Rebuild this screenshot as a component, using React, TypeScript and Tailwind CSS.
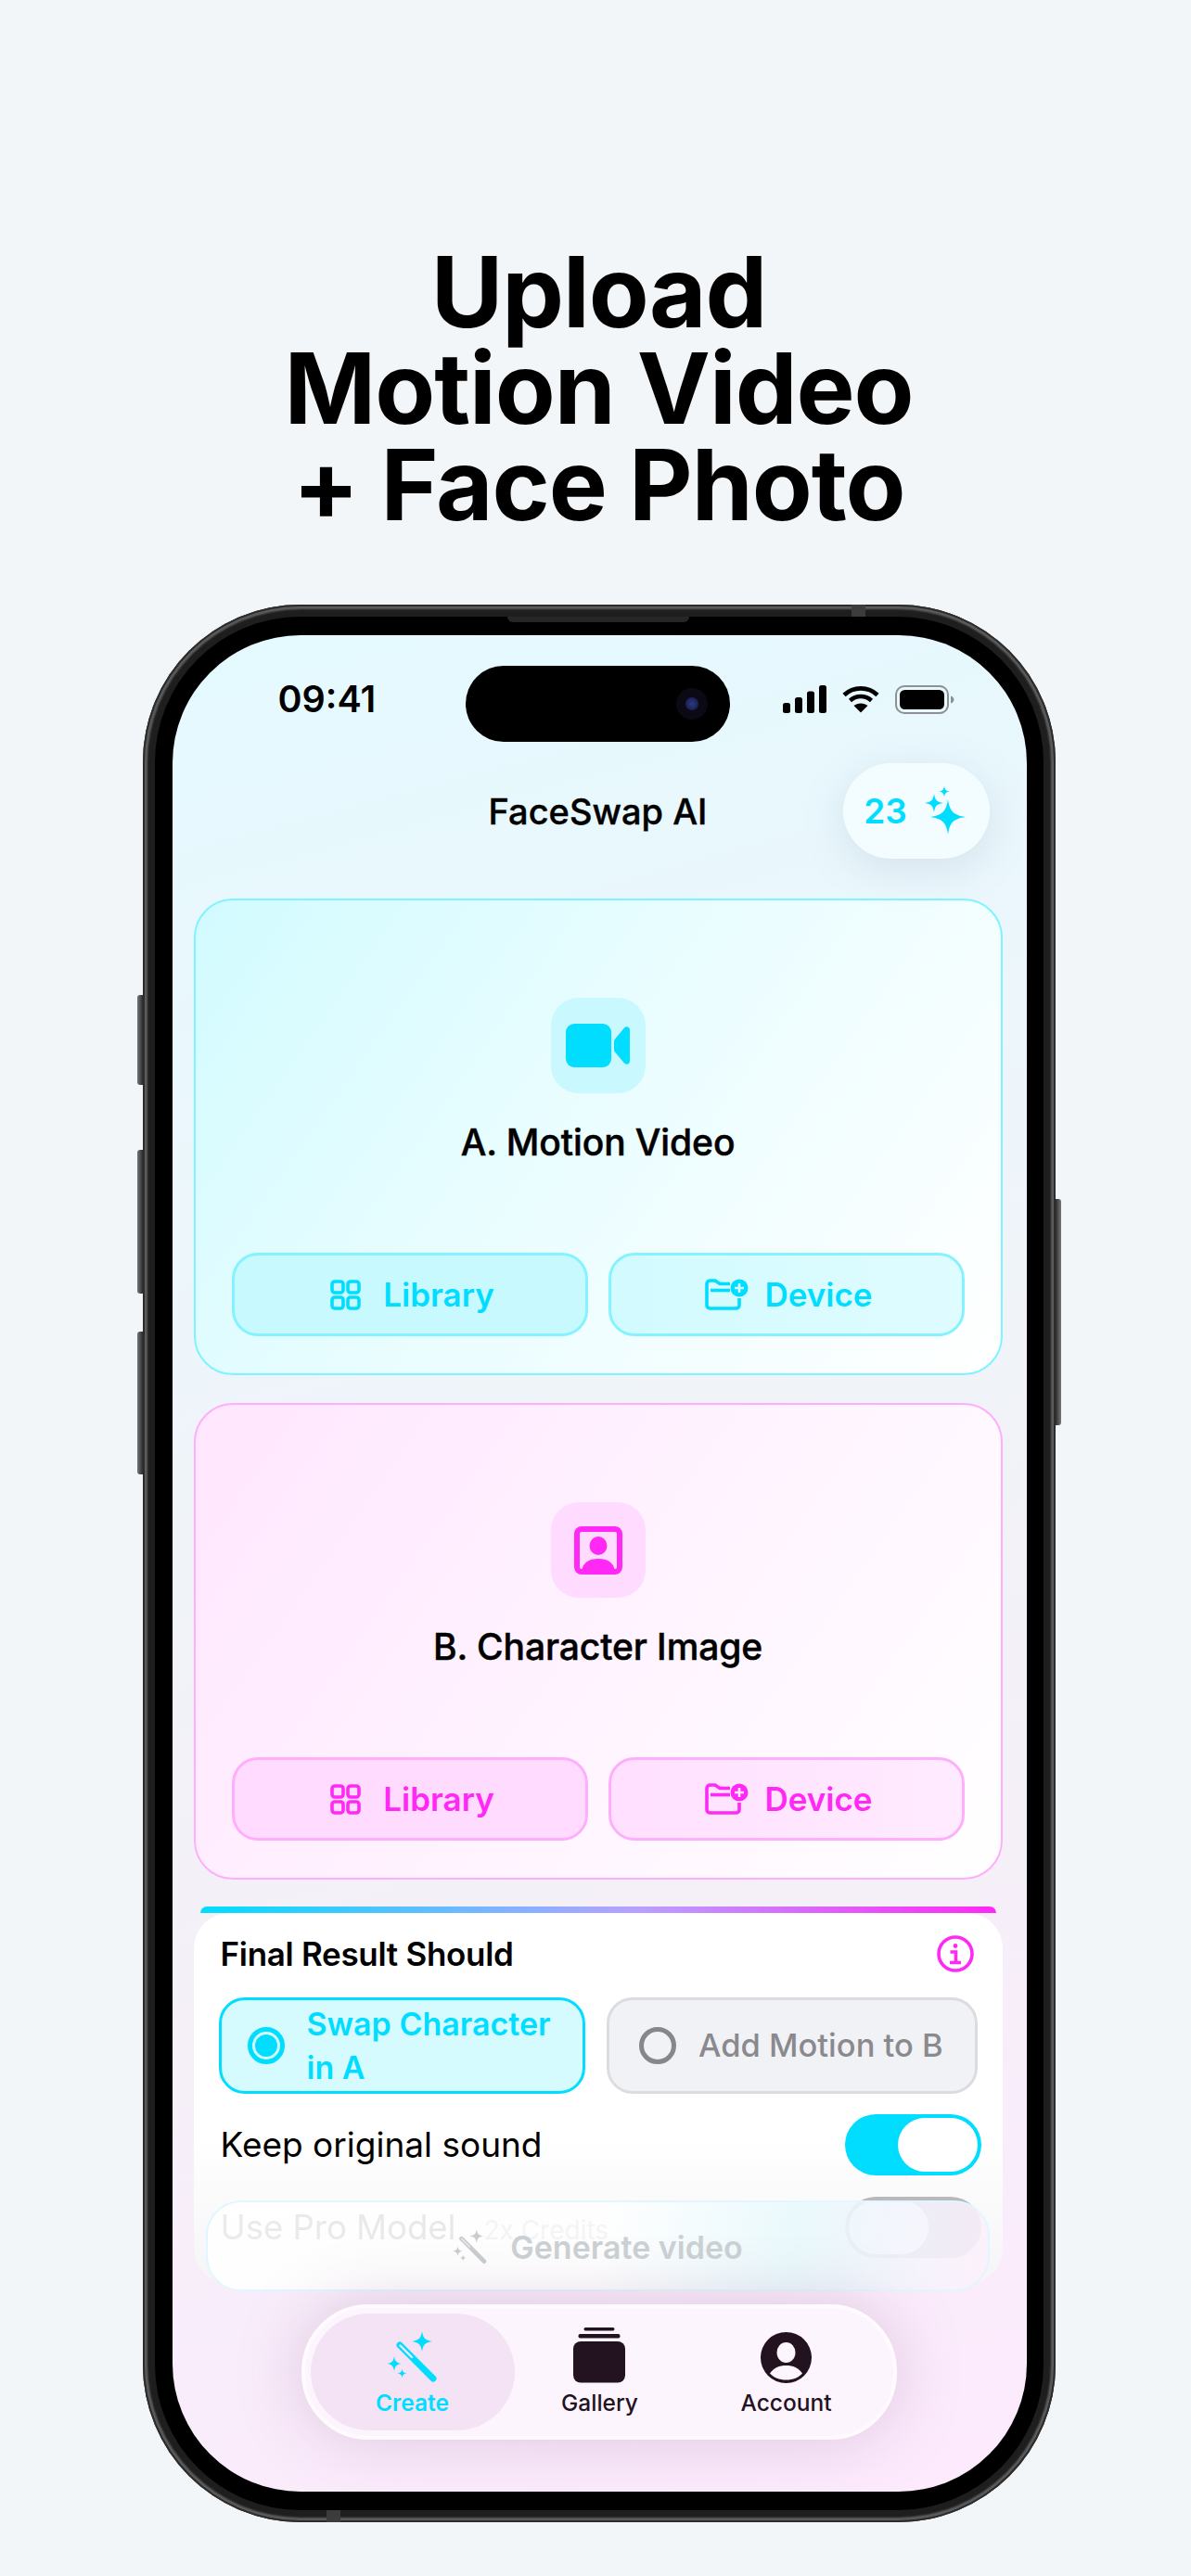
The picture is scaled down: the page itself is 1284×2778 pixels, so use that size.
import type React from "react";

const CYAN = "#00ddff";
const MAGENTA = "#ff28f4";
const STAR =
  "M0 -1C.1 -.32 .32 -.1 1 0C.32 .1 .1 .32 0 1C-.1 .32 -.32 .1 -1 0C-.32 -.1 -.1 -.32 0 -1Z";

const Star = ({ x, y, r, fill }: { x: number; y: number; r: number; fill: string }) => (
  <path d={STAR} transform={`translate(${x} ${y}) scale(${r})`} fill={fill} />
);

const SignalIcon = () => (
  <svg width="47" height="30" viewBox="0 0 47 30" fill="#000">
    <rect x="0" y="19" width="8" height="11" rx="2.5" />
    <rect x="13" y="13" width="8" height="17" rx="2.5" />
    <rect x="26" y="6.5" width="8" height="23.5" rx="2.5" />
    <rect x="39" y="0" width="8" height="30" rx="2.5" />
  </svg>
);

const WifiIcon = () => (
  <svg width="40" height="30" viewBox="0 0 40 30" fill="none" stroke="#000" strokeWidth="4.6">
    <path d="M2 10.5C12 1 28 1 38 10.5" />
    <path d="M8.5 16.5C15 10.5 25 10.5 31.5 16.5" />
    <path d="M20 29.5L12.5 22C16.5 18.5 23.5 18.5 27.5 22Z" fill="#000" stroke="none" />
  </svg>
);

const BatteryIcon = () => (
  <svg width="65" height="31" viewBox="0 0 65 31" fill="none">
    <rect x="1" y="1" width="56" height="29" rx="9" stroke="#8d9094" strokeWidth="2" />
    <rect x="5" y="5" width="48" height="21" rx="5.5" fill="#000" />
    <path d="M60 11.5C62.5 12.5 63.5 14 63.5 15.5C63.5 17 62.5 18.5 60 19.5Z" fill="#8d9094" />
  </svg>
);

const SparklesIcon = () => (
  <svg width="48" height="54" viewBox="0 0 48 54">
    <Star x={26} y={33} r={19} fill={CYAN} />
    <Star x={11} y={18} r={10} fill={CYAN} />
    <Star x={22} y={5.5} r={6} fill={CYAN} />
  </svg>
);

const VideoIcon = () => (
  <svg width="70" height="48" viewBox="0 0 70 48" fill={CYAN}>
    <rect x="0" y="0" width="49" height="47" rx="9" />
    <path d="M53 16.5L63 4.5C65.5 2 69 3.5 69 7V40C69 43.5 65.5 45 63 42.5L53 30.5C52.4 29.7 52 29 52 28V19C52 18 52.4 17.3 53 16.5Z" />
  </svg>
);

const PortraitIcon = () => (
  <svg width="52" height="52" viewBox="0 0 52 52" fill={MAGENTA}>
    <rect x="3" y="3" width="46" height="46" rx="5" fill="none" stroke={MAGENTA} strokeWidth="6" />
    <ellipse cx="26" cy="21" rx="9.5" ry="10" />
    <path d="M8 49C9 39 16 35 26 35C36 35 43 39 44 49Z" />
  </svg>
);

const GridIcon = ({ color }: { color: string }) => (
  <svg width="33" height="33" viewBox="0 0 33 33" fill="none" stroke={color} strokeWidth="3.6">
    <rect x="2" y="2" width="12" height="12" rx="3" />
    <rect x="19" y="2" width="12" height="12" rx="3" />
    <rect x="2" y="19" width="12" height="12" rx="3" />
    <rect x="19" y="19" width="12" height="12" rx="3" />
  </svg>
);

const FolderPlusIcon = ({ color, plus }: { color: string; plus: string }) => (
  <svg width="47" height="34" viewBox="0 0 47 34" fill="none">
    <path
      d="M37 21V28.5A3.5 3.5 0 0 1 33.5 32H5.5A3.5 3.5 0 0 1 2 28.5V5.5A3.5 3.5 0 0 1 5.5 2H11L16 5.5H27"
      stroke={color}
      strokeWidth="3.6"
    />
    <path d="M6 12.5H27" stroke={color} strokeWidth="3.6" />
    <circle cx="37" cy="10" r="9.5" fill={color} />
    <path d="M37 5V15M32 10H42" stroke={plus} strokeWidth="2.6" />
  </svg>
);

const InfoIcon = () => (
  <svg width="40" height="40" viewBox="0 0 40 40" fill="none" stroke={MAGENTA} strokeWidth="3.6">
    <circle cx="20" cy="20" r="18" />
    <circle cx="20" cy="11.5" r="2.4" fill={MAGENTA} stroke="none" />
    <path d="M14.5 18H20.5V29M14 29.5H26" />
  </svg>
);

const WandIcon = ({ color, size }: { color: string; size: number }) => (
  <svg width={size} height={size} viewBox="0 0 56 56" fill="none">
    <path d="M14 15L50 51" stroke={color} strokeWidth="7" strokeLinecap="round" />
    <path d="M14.5 15.5L27 28" stroke="#f5e3f5" strokeWidth="2.4" strokeLinecap="round" />
    <Star x={38} y={11} r={11} fill={color} />
    <Star x={8} y={35} r={8} fill={color} />
    <Star x={16.5} y={45.5} r={5} fill={color} />
  </svg>
);

const GalleryIcon = () => (
  <svg width="57" height="60" viewBox="0 0 57 60" fill="#23121f">
    <rect x="11.5" y="0" width="33" height="3.4" rx="1.7" />
    <rect x="5.5" y="7" width="45" height="4.4" rx="2" />
    <rect x="0" y="15" width="56" height="44.5" rx="8" />
  </svg>
);

const AccountIcon = () => (
  <svg width="55" height="55" viewBox="0 0 55 55">
    <circle cx="27.5" cy="27.5" r="27.5" fill="#23121f" />
    <ellipse cx="27.5" cy="22" rx="10" ry="11" fill="#fdf5fe" />
    <path d="M10 44.5C14 38.5 20 36 27.5 36C35 36 41 38.5 45 44.5C41 49 35 51.5 27.5 51.5C20 51.5 14 49 10 44.5Z" fill="#fdf5fe" />
  </svg>
);

const SourceCard = ({
  title,
  icon,
  cardClass,
  boxClass,
  libraryClass,
  deviceClass,
  color,
  plus,
}: {
  title: string;
  icon: React.ReactNode;
  cardClass: string;
  boxClass: string;
  libraryClass: string;
  deviceClass: string;
  color: string;
  plus: string;
}) => (
  <div className={`flex h-[514px] flex-col items-center rounded-[42px] border-2 px-[39px] pt-[105px] pb-[40px] ${cardClass}`}>
    <div className={`flex h-[103px] w-[102px] items-center justify-center rounded-[30px] ${boxClass}`}>{icon}</div>
    <div className="mt-[29px] text-[39px] leading-[48px] font-medium tracking-[-0.1px] text-black [-webkit-text-stroke:0.5px_black]">{title}</div>
    <div className="mt-auto flex w-full gap-[22px]">
      <div className={`flex h-[90px] flex-1 items-center justify-center gap-[24px] rounded-[28px] border-[3px] pl-[6px] text-[35px] font-semibold ${libraryClass}`}>
        <GridIcon color={color} />
        Library
      </div>
      <div className={`flex h-[90px] flex-1 items-center justify-center gap-[17px] rounded-[28px] border-[3px] pl-[6px] text-[35px] font-semibold ${deviceClass}`}>
        <FolderPlusIcon color={color} plus={plus} />
        Device
      </div>
    </div>
  </div>
);

const Toggle = ({ on }: { on: boolean }) => (
  <div className={`flex h-[66px] w-[147px] items-center rounded-full px-[4px] ${on ? "justify-end bg-[#00ddff]" : "justify-start bg-[#b9b9bd]"}`}>
    <div className="h-[58px] w-[86px] rounded-full bg-white" />
  </div>
);

const NavItem = ({
  label,
  icon,
  className,
}: {
  label: string;
  icon: React.ReactNode;
  className: string;
}) => (
  <div className={`flex flex-col items-center ${className}`}>
    <div className="flex h-[76px] items-end pb-[1px]">{icon}</div>
    <div className="mt-[4px] text-[24.5px] leading-[32px]">{label}</div>
  </div>
);

export default function App() {
  return (
    <div className="flex h-[2778px] w-[1284px] flex-col items-center overflow-hidden bg-[#f3f6f9] pt-[263px] pl-[7px] font-['Inter',sans-serif]">
      <h1 className="text-center text-[106px] leading-[104px] font-bold tracking-[-1px] text-black">
        Upload
        <br />
        Motion Video
        <br />+ Face Photo
      </h1>

      <div className="relative mt-[77px] h-[2068px] w-[984px] shrink-0 rounded-[170px] bg-[#1e1e1e] p-[13px] shadow-[inset_0_0_0_2px_#2c2c2c,inset_0_0_2px_5px_#5d5d5d]">
        {/* side buttons */}
        <div className="absolute top-[421px] -left-[6px] h-[97px] w-[6px] rounded-l-[3px] bg-[linear-gradient(90deg,#777,#2b2b2b)]" />
        <div className="absolute top-[588px] -left-[6px] h-[155px] w-[6px] rounded-l-[3px] bg-[linear-gradient(90deg,#777,#2b2b2b)]" />
        <div className="absolute top-[784px] -left-[6px] h-[154px] w-[6px] rounded-l-[3px] bg-[linear-gradient(90deg,#777,#2b2b2b)]" />
        <div className="absolute top-[641px] -right-[6px] h-[244px] w-[6px] rounded-r-[3px] bg-[linear-gradient(270deg,#777,#2b2b2b)]" />
        <div className="absolute top-0 left-[764px] h-[13px] w-[15px] bg-[#3c3c3c]" />
        <div className="absolute bottom-0 left-[198px] h-[13px] w-[15px] bg-[#3c3c3c]" />

        <div className="relative h-full rounded-[157px] bg-black py-[20px] pr-[18px] pl-[19px]">
          <div className="absolute top-0 left-[380px] h-[6px] w-[196px] rounded-b-[6px] bg-[#262626]" />

          <div className="relative flex h-full flex-col overflow-hidden rounded-[138px] bg-[linear-gradient(165deg,#e4faff_0%,#eef5fa_35%,#f3f1f7_60%,#fdeafd_100%)] pr-[26px] pl-[23px]">
            {/* status bar */}
            <div className="relative -mr-[26px] -ml-[23px] flex h-[115px] shrink-0 items-start justify-between pt-[33px] pr-[77px] pl-[114px]">
              <div className="mt-[11px] text-[39.5px] leading-[50px] font-semibold text-black">09:41</div>
              <div className="absolute top-[33px] left-[316px] flex h-[82px] w-[285px] items-center justify-end rounded-full bg-black pr-[24px]">
                <div className="flex h-[34px] w-[34px] items-center justify-center rounded-full bg-[#0b0a14]">
                  <div className="h-[14px] w-[14px] rounded-full bg-[radial-gradient(circle,#2a3a86,#15153a)]" />
                </div>
              </div>
              <div className="mt-[21px] flex items-start gap-[17px]">
                <SignalIcon />
                <WifiIcon />
                <BatteryIcon />
              </div>
            </div>

            {/* header */}
            <div className="relative mt-[23px] flex h-[103px] shrink-0 items-center justify-center">
              <span className="mt-[2px] text-[38px] font-medium text-black [-webkit-text-stroke:0.4px_black]">FaceSwap AI</span>
              <div className="absolute top-0 right-[14px] flex h-[103px] w-[158px] items-center justify-center gap-[18px] rounded-[52px] bg-[#f3fdff] text-[37px] font-semibold text-[#00ddff] shadow-[0_10px_40px_rgba(150,165,190,0.25)]">
                23
                <SparklesIcon />
              </div>
            </div>

            <div className="mt-[43px] flex flex-col gap-[30px]">
              <SourceCard
                title="A. Motion Video"
                icon={<VideoIcon />}
                cardClass="border-[#7ff3ff] bg-[linear-gradient(125deg,#d2fbff,#e9fdff_45%,#ffffff)]"
                boxClass="bg-[#c9f9ff]"
                libraryClass="border-[#85f3ff] bg-[#c8f9ff] text-[#00ddff]"
                deviceClass="border-[#85f3ff] bg-[linear-gradient(90deg,#d2fbff,#dffcff)] text-[#00ddff]"
                color={CYAN}
                plus="#d6fbff"
              />
              <SourceCard
                title="B. Character Image"
                icon={<PortraitIcon />}
                cardClass="border-[#ffaefb] bg-[linear-gradient(125deg,#ffe6fe,#fff3ff_50%,#ffffff)]"
                boxClass="bg-[#ffdcff]"
                libraryClass="border-[#ffaefb] bg-[#ffdcff] text-[#ff28f4]"
                deviceClass="border-[#ffaefb] bg-[linear-gradient(90deg,#ffe0ff,#ffebff)] text-[#ff28f4]"
                color={MAGENTA}
                plus="#ffe6ff"
              />
            </div>

            {/* options panel */}
            <div className="mt-[29px] shrink-0">
              <div className="mx-[7px] h-[7px] rounded-t-[14px] bg-[linear-gradient(90deg,#00ddff,#b8a0ff_55%,#ff28f4)]" />
              <div className="h-[400px] rounded-[38px] bg-[linear-gradient(180deg,#ffffff_60%,#f5f4f7)] px-[27px] pt-[22px]">
                <div className="flex h-[44px] items-center justify-between pr-[4px] pl-[2px]">
                  <span className="text-[35px] font-semibold tracking-[-0.3px] text-black">Final Result Should</span>
                  <InfoIcon />
                </div>
                <div className="mt-[25px] flex gap-[23px]">
                  <div className="flex h-[104px] flex-1 items-center gap-[24px] rounded-[28px] border-[3px] border-[#00ddff] bg-[#d6fbff] pl-[28px]">
                    <div className="flex h-[40px] w-[40px] shrink-0 items-center justify-center rounded-full border-[5px] border-[#00ddff]">
                      <div className="h-[24px] w-[24px] rounded-full bg-[#00ddff]" />
                    </div>
                    <span className="text-[34px] leading-[47px] font-semibold text-[#00ddff]">
                      Swap Character
                      <br />
                      in A
                    </span>
                  </div>
                  <div className="flex h-[104px] flex-1 items-center gap-[24px] rounded-[28px] border-[3px] border-[#dcdce0] bg-[#f1f2f6] pl-[32px]">
                    <div className="h-[40px] w-[40px] shrink-0 rounded-full border-[5px] border-[#87878b]" />
                    <span className="text-[34.5px] font-medium text-[#8a8a8e]">Add Motion to B</span>
                  </div>
                </div>
                <div className="mt-[22px] -mr-[4px] flex items-center justify-between pl-[2px]">
                  <span className="text-[37px] text-black">Keep original sound</span>
                  <Toggle on />
                </div>
                <div className="mt-[23px] -mr-[4px] flex items-center justify-between pl-[2px]">
                  <span className="flex items-baseline gap-[30px]">
                    <span className="text-[36.5px] text-black">Use Pro Model</span>
                    <span className="text-[28px] text-[#8a8a8e]">2x Credits</span>
                  </span>
                  <Toggle on={false} />
                </div>
              </div>
            </div>

            {/* generate button, floats over the panel */}
            <div className="absolute top-[1688px] left-[36px] flex h-[98px] w-[845px] items-start justify-center gap-[24px] rounded-[38px] border-2 border-[#e2f6fd] bg-[linear-gradient(100deg,rgba(255,255,255,0.92)_0%,rgba(255,255,255,0.9)_50%,rgba(232,249,252,0.9)_75%,rgba(253,240,252,0.88)_100%)] pt-[27px] pr-[2px] pl-[3px]">
              <div className="mt-[2px]">
                <WandIcon color="#c9cdcf" size={38} />
              </div>
              <span className="text-[34px] leading-[44px] font-semibold text-[#ccd1d3]">Generate video</span>
            </div>

            {/* bottom nav */}
            <div className="absolute top-[1800px] left-[139px] flex h-[146px] w-[642px] items-stretch rounded-[72px] border-[4px] border-[#fffafe] bg-[#fdf5fe] p-[6px] text-[#23121f] shadow-[0_0_70px_rgba(150,100,150,0.28)]">
              <NavItem
                label="Create"
                className="w-[220px] rounded-[64px] bg-[#f4e3f4] font-semibold text-[#00ddff]"
                icon={<WandIcon color={CYAN} size={56} />}
              />
              <NavItem label="Gallery" className="w-[184px] font-medium" icon={<GalleryIcon />} />
              <NavItem label="Account" className="w-[218px] font-medium" icon={<AccountIcon />} />
            </div>
          </div>
        </div>
      </div>
    </div>
  );
}
